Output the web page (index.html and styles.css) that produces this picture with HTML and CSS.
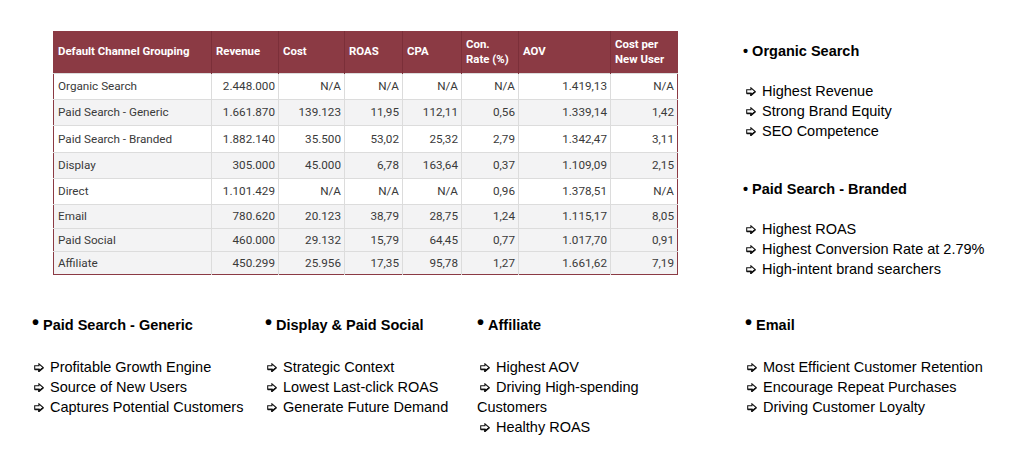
FILE: index.html
```html
<!DOCTYPE html>
<html lang="en">
<head>
<meta charset="utf-8">
<title>Channel Grouping</title>
<link rel="stylesheet" href="styles.css">
</head>
<body>
<svg width="0" height="0" class="defs">
  <defs>
    <symbol id="arw" viewBox="0 0 10 9">
      <path d="M0.7 2.7 H4.9 V0.8 L9.2 4.5 L4.9 8.2 V6.3 H0.7 Z" fill="#fff" stroke="#111" stroke-width="1.05" stroke-linejoin="miter"/>
      <path d="M0.7 6.5 H5 V8.3 L9.3 4.6" fill="none" stroke="#111" stroke-width="1.5"/>
    </symbol>
  </defs>
</svg>
<div class="top">
  <table class="data">
    <thead>
      <tr>
        <th class="c1">Default Channel Grouping</th>
        <th class="c2">Revenue</th>
        <th class="c3">Cost</th>
        <th class="c4">ROAS</th>
        <th class="c5">CPA</th>
        <th class="c6">Con.<br>Rate (%)</th>
        <th class="c7">AOV</th>
        <th class="c8">Cost per<br>New User</th>
      </tr>
    </thead>
    <tbody>
      <tr class="r26"><td>Organic Search</td><td>2.448.000</td><td>N/A</td><td>N/A</td><td>N/A</td><td>N/A</td><td>1.419,13</td><td>N/A</td></tr>
      <tr class="r26 alt"><td>Paid Search - Generic</td><td>1.661.870</td><td>139.123</td><td>11,95</td><td>112,11</td><td>0,56</td><td>1.339,14</td><td>1,42</td></tr>
      <tr class="r27"><td>Paid Search - Branded</td><td>1.882.140</td><td>35.500</td><td>53,02</td><td>25,32</td><td>2,79</td><td>1.342,47</td><td>3,11</td></tr>
      <tr class="r26 alt"><td>Display</td><td>305.000</td><td>45.000</td><td>6,78</td><td>163,64</td><td>0,37</td><td>1.109,09</td><td>2,15</td></tr>
      <tr class="r26"><td>Direct</td><td>1.101.429</td><td>N/A</td><td>N/A</td><td>N/A</td><td>0,96</td><td>1.378,51</td><td>N/A</td></tr>
      <tr class="r24 alt"><td>Email</td><td>780.620</td><td>20.123</td><td>38,79</td><td>28,75</td><td>1,24</td><td>1.115,17</td><td>8,05</td></tr>
      <tr class="r23 alt"><td>Paid Social</td><td>460.000</td><td>29.132</td><td>15,79</td><td>64,45</td><td>0,77</td><td>1.017,70</td><td>0,91</td></tr>
      <tr class="r23 alt"><td>Affiliate</td><td>450.299</td><td>25.956</td><td>17,35</td><td>95,78</td><td>1,27</td><td>1.661,62</td><td>7,19</td></tr>
    </tbody>
  </table>

  <div class="side">
    <section class="note">
      <h3>• Organic Search</h3>
      <ul>
        <li><svg class="arrow"><use href="#arw"/></svg>Highest Revenue</li>
        <li><svg class="arrow"><use href="#arw"/></svg>Strong Brand Equity</li>
        <li><svg class="arrow"><use href="#arw"/></svg>SEO Competence</li>
      </ul>
    </section>
    <section class="note second">
      <h3>• Paid Search - Branded</h3>
      <ul>
        <li><svg class="arrow"><use href="#arw"/></svg>Highest ROAS</li>
        <li><svg class="arrow"><use href="#arw"/></svg>Highest Conversion Rate at 2.79%</li>
        <li><svg class="arrow"><use href="#arw"/></svg>High-intent brand searchers</li>
      </ul>
    </section>
  </div>
</div>

<div class="bottom">
  <section class="card">
    <h3><span class="dot">•</span>Paid Search - Generic</h3>
    <ul>
      <li><svg class="arrow"><use href="#arw"/></svg>Profitable Growth Engine</li>
      <li><svg class="arrow"><use href="#arw"/></svg>Source of New Users</li>
      <li><svg class="arrow"><use href="#arw"/></svg>Captures Potential Customers</li>
    </ul>
  </section>
  <section class="card">
    <h3><span class="dot">•</span>Display &amp; Paid Social</h3>
    <ul>
      <li><svg class="arrow"><use href="#arw"/></svg>Strategic Context</li>
      <li><svg class="arrow"><use href="#arw"/></svg>Lowest Last-click ROAS</li>
      <li><svg class="arrow"><use href="#arw"/></svg>Generate Future Demand</li>
    </ul>
  </section>
  <section class="card narrow">
    <h3><span class="dot">•</span>Affiliate</h3>
    <ul>
      <li><svg class="arrow"><use href="#arw"/></svg>Highest AOV</li>
      <li><svg class="arrow"><use href="#arw"/></svg>Driving High-spending Customers</li>
      <li><svg class="arrow"><use href="#arw"/></svg>Healthy ROAS</li>
    </ul>
  </section>
  <section class="card">
    <h3><span class="dot">•</span>Email</h3>
    <ul>
      <li><svg class="arrow"><use href="#arw"/></svg>Most Efficient Customer Retention</li>
      <li><svg class="arrow"><use href="#arw"/></svg>Encourage Repeat Purchases</li>
      <li><svg class="arrow"><use href="#arw"/></svg>Driving Customer Loyalty</li>
    </ul>
  </section>
</div>
</body>
</html>
```

FILE: styles.css
```css
html, body {
  margin: 0;
  padding: 0;
  background: #ffffff;
}

body {
  font-family: "Liberation Sans", Arial, sans-serif;
  color: #000;
  width: 1024px;
  height: 474px;
  overflow: hidden;
}

.defs {
  position: absolute;
  width: 0;
  height: 0;
}

.top {
  display: flex;
  align-items: flex-start;
  padding: 31px 0 0 53px;
}

/* ---------- table ---------- */
.data {
  width: 624px;
  table-layout: fixed;
  border-collapse: collapse;
  font-family: Roboto, "Liberation Sans", sans-serif;
  font-size: 11.7px;
  color: #3a3a3a;
  border: 1.5px solid #8b3a44;
  border-top: none;
}

.data th {
  background: #8b3a44;
  color: #fff;
  font-size: 11.4px;
  font-weight: 700;
  text-align: left;
  vertical-align: middle;
  height: 42px;
  padding: 0 4px;
  line-height: 15px;
  border-left: 1px solid #7b2f39;
  box-sizing: border-box;
}

.data th:first-child { border-left: none; }

.c1 { width: 158px; }
.c2 { width: 67px; }
.c3 { width: 66px; }
.c4 { width: 58px; }
.c5 { width: 59px; }
.c6 { width: 57px; }
.c7 { width: 92px; }
.c8 { width: 67px; }

.data td {
  padding: 0 3px 0 4px;
  border: 1px solid #dcdcdc;
  text-align: right;
  vertical-align: middle;
  white-space: nowrap;
  line-height: 14px;
}

.data td:first-child {
  text-align: left;
  border-left: none;
}

.data td:last-child { border-right: none; }
.data tbody tr:last-child td { border-bottom: none; }

.data tr.alt td { background: #f3f3f4; }

.r27 { height: 27px; }
.r26 { height: 26px; }
.r24 { height: 24px; }
.r23 { height: 23px; }

/* ---------- notes ---------- */
.side {
  margin-left: 67px;
  padding-top: 10px;
}

h3 {
  margin: 0;
  font-size: 14.5px;
  line-height: 20px;
  font-weight: 700;
}

ul {
  list-style: none;
  margin: 20px 0 0;
  padding: 0;
  font-size: 14.5px;
  line-height: 20px;
}

.note { margin-left: -2px; }

.note ul li { text-indent: 3px; }

.second { margin-top: 38px; }

.arrow {
  display: inline-block;
  width: 10px;
  height: 9px;
  margin-right: 6px;
  vertical-align: 0;
}

.bottom {
  display: grid;
  grid-template-columns: 233px 212px 268px 1fr;
  padding-left: 32px;
  margin-top: 36px;
}

.bottom ul { margin-top: 22px; }

.bottom li { text-indent: 2px; }

.dot {
  display: inline-block;
  font-size: 20px;
  width: 11px;
  text-indent: 0;
  vertical-align: 1px;
  line-height: 0;
}

.narrow { padding-right: 60px; }
.narrow li { text-indent: 3px; }
```
